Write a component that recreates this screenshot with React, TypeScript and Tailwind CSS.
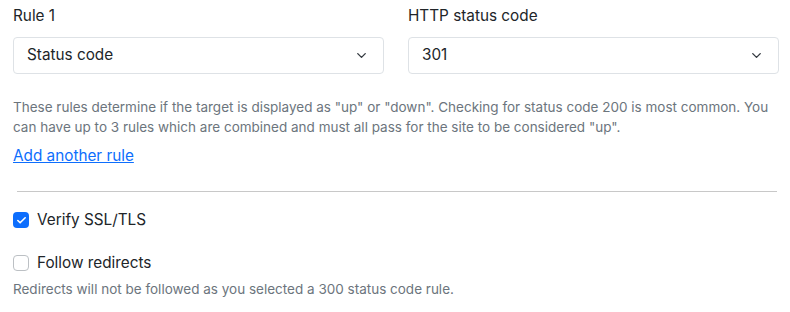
import { ChevronDown, Check } from 'lucide-react';

function Select({ label, value }: { label: string; value: string }) {
  return (
    <div className="flex-1">
      <div className="text-[15.3px] leading-[24px] text-[#212529] mb-[9px] mt-[3px]">{label}</div>
      <div className="h-[37px] border border-[#dee2e6] rounded-[4px] bg-white flex items-center justify-between pl-[13px] pr-[14px]">
        <span className="text-[15.3px] text-[#212529]">{value}</span>
        <ChevronDown size={15} strokeWidth={2.2} className="text-[#343a40]" />
      </div>
    </div>
  );
}

export default function App() {
  return (
    <div className="w-[790px] h-[312px] bg-white pl-[13px] pr-[11px] pt-[1px] font-['Inter',sans-serif] overflow-hidden">
      <div className="flex gap-[24px]">
        <Select label="Rule 1" value="Status code" />
        <Select label="HTTP status code" value="301" />
      </div>

      <p className="mt-[23px] text-[13.5px] leading-[20px] text-[#6c757d] pr-[6px]">
        These rules determine if the target is displayed as "up" or "down". Checking for status code 200 is most common. You can have up to 3 rules which are combined and must all pass for the site to be considered "up".
      </p>
      <a href="#" className="inline-block mt-[7px] text-[15.3px] leading-[24px] text-[#0d6efd] underline">
        Add another rule
      </a>

      <hr className="ml-[4px] mr-[2px] mt-[23px] border-t border-[#c8c8c8]" />

      <label className="flex items-center gap-[8px] mt-[16px]">
        <span className="w-[16px] h-[16px] rounded-[4px] bg-[#0d6efd] flex items-center justify-center">
          <Check size={11} strokeWidth={3.5} className="text-white" />
        </span>
        <span className="text-[15.3px] leading-[24px] text-[#212529]">Verify SSL/TLS</span>
      </label>

      <label className="flex items-center gap-[8px] mt-[19px]">
        <span className="w-[16px] h-[16px] rounded-[4px] border border-[#bcc0c4] bg-white" />
        <span className="text-[15.3px] leading-[24px] text-[#212529]">Follow redirects</span>
      </label>
      <p className="mt-[4px] text-[13.5px] leading-[20px] text-[#6c757d]">
        Redirects will not be followed as you selected a 300 status code rule.
      </p>
    </div>
  );
}
